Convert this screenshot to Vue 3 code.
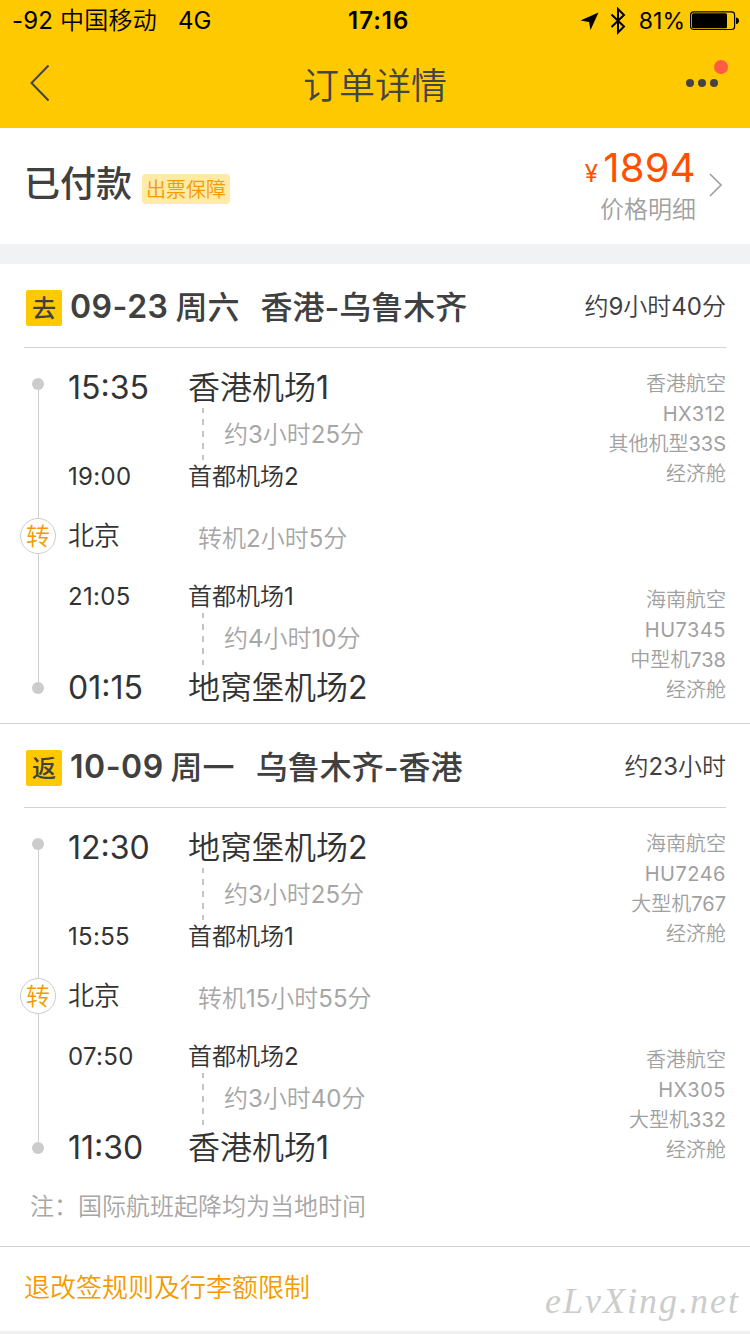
<template>
  <div class="page">
    <header class="top">
      <div class="status">
        <span class="carrier">-92 中国移动</span>
        <span class="net">4G</span>
        <span class="clock">17:16</span>
        <div class="status-right">
          <svg class="locate" width="20" height="20" viewBox="0 0 20 20">
            <path d="M18.5 1.5L0.5 9.5L9 11L10.5 19Z" fill="#000" />
          </svg>
          <svg class="bluetooth" width="16" height="28" viewBox="0 0 16 28">
            <path d="M1.5 7.5L14 19.5L8 25.5V2L14 8L1.5 20" fill="none" stroke="#000" stroke-width="2" />
          </svg>
          <span class="percent">81%</span>
          <svg class="battery" width="50" height="20" viewBox="0 0 50 20">
            <rect x="0.6" y="0.9" width="44" height="17.6" rx="3" fill="none" stroke="#000" stroke-width="1.2" />
            <rect x="2" y="2.2" width="35" height="15" rx="1.5" fill="#000" />
            <path d="M46 6.5Q49 7 49 9.7Q49 12.500 46 13Z" fill="#000" />
          </svg>
        </div>
      </div>
      <nav class="nav">
        <svg class="back" width="20" height="38" viewBox="0 0 20 38">
          <path d="M18.500 1.500L1.500 19L18.500 36.500" fill="none" stroke="#444" stroke-width="2" />
        </svg>
        <h1>订单详情</h1>
        <div class="more">
          <i></i><i></i><i></i>
          <b class="badge"></b>
        </div>
      </nav>
    </header>

    <section class="summary">
      <h2>已付款</h2>
      <span class="tag">出票保障</span>
      <div class="price">
        <p class="amount"><small>¥</small>1894</p>
        <p class="detail">价格明细</p>
      </div>
      <svg class="arrow" width="14" height="24" viewBox="0 0 14 24">
        <path d="M1 1L12 12L1 23" fill="none" stroke="#a0a0a0" stroke-width="1.7" />
      </svg>
    </section>

    <section v-for="trip in trips" :key="trip.type" class="trip">
      <div class="trip-head">
        <span class="type">{{ trip.type }}</span>
        <span class="date">{{ trip.date }}</span>
        <span class="week">{{ trip.week }}</span>
        <span class="route">{{ trip.route }}</span>
        <span class="total">{{ trip.total }}</span>
      </div>
      <div class="trip-body">
        <div class="rail">
          <i class="dot"></i>
          <i class="line"></i>
          <span class="turn">转</span>
          <i class="line"></i>
          <i class="dot"></i>
        </div>
        <div class="stops">
          <template v-for="(leg, index) in trip.legs" :key="leg.no">
            <div v-if="index === 1" class="transfer">
              <span class="city">{{ trip.city }}</span>
              <span class="wait">{{ trip.wait }}</span>
            </div>
            <div class="stop" :class="{ big: index === 0 }">
              <span class="time">{{ leg.start }}</span>
              <span>{{ leg.from }}</span>
            </div>
            <div class="duration" :class="{ short: index === 1 }">
              <i class="dash"></i>
              <span>{{ leg.duration }}</span>
            </div>
            <div class="stop" :class="{ big: index === 1, last: index === 1 }">
              <span class="time">{{ leg.end }}</span>
              <span>{{ leg.to }}</span>
            </div>
          </template>
        </div>
        <div class="planes">
          <ul v-for="leg in trip.legs" :key="leg.no">
            <li>{{ leg.airline }}</li>
            <li class="no">{{ leg.no }}</li>
            <li>{{ leg.plane }}</li>
            <li>经济舱</li>
          </ul>
        </div>
      </div>
    </section>

    <p class="note">注：国际航班起降均为当地时间</p>
    <footer class="rules">
      <span>退改签规则及行李额限制</span>
      <span class="mark">eLvXing.net</span>
    </footer>
  </div>
</template>

<script setup>
import { ref } from 'vue';

const trips = ref([
  {
    type: '去',
    date: '09-23',
    week: '周六',
    route: '香港-乌鲁木齐',
    total: '约9小时40分',
    city: '北京',
    wait: '转机2小时5分',
    legs: [
      { start: '15:35', from: '香港机场1', duration: '约3小时25分', end: '19:00', to: '首都机场2', airline: '香港航空', no: 'HX312', plane: '其他机型33S' },
      { start: '21:05', from: '首都机场1', duration: '约4小时10分', end: '01:15', to: '地窝堡机场2', airline: '海南航空', no: 'HU7345', plane: '中型机738' }
    ]
  },
  {
    type: '返',
    date: '10-09',
    week: '周一',
    route: '乌鲁木齐-香港',
    total: '约23小时',
    city: '北京',
    wait: '转机15小时55分',
    legs: [
      { start: '12:30', from: '地窝堡机场2', duration: '约3小时25分', end: '15:55', to: '首都机场1', airline: '海南航空', no: 'HU7246', plane: '大型机767' },
      { start: '07:50', from: '首都机场2', duration: '约3小时40分', end: '11:30', to: '香港机场1', airline: '香港航空', no: 'HX305', plane: '大型机332' }
    ]
  }
]);
</script>

<style>
body {
  margin: 0;
  background-color: #fff;
}
</style>

<style scoped>
.page {
  width: 750px;
  height: 1334px;
  overflow: hidden;
  background-color: #fff;
  color: #333;
  font-family: Inter, "Noto Sans CJK SC DemiLight", "Noto Sans CJK SC", sans-serif;
  font-size: 24px;
  white-space: nowrap;
}

h1,
h2,
p,
ul {
  margin: 0;
  padding: 0;
}

i {
  display: block;
}

.top {
  height: 128px;
  background-color: #ffc900;
}

.status {
  display: grid;
  grid-template-columns: 166px 158px 84px 1fr;
  align-items: center;
  height: 40px;
  padding-left: 12px;
  color: #000;
  line-height: 40px;
}

.carrier,
.net,
.clock,
.percent {
  padding-top: 1px;
}

.carrier {
  letter-spacing: 0.2px;
}

.clock {
  padding-left: 12px;
  font-weight: 600;
  letter-spacing: 1px;
}

.status-right {
  display: flex;
  align-items: center;
  justify-content: flex-end;
  padding-right: 10px;
}

.bluetooth {
  margin-left: 10px;
}

.percent {
  margin-left: 13px;
  margin-right: 5px;
  font-size: 23px;
}

.nav {
  display: flex;
  align-items: center;
  justify-content: space-between;
  height: 88px;
  padding: 0 32px 2px 30px;
  box-sizing: border-box;
}

.nav h1 {
  padding-left: 14px;
  color: #444;
  font-size: 36px;
  font-weight: 400;
}

.more {
  position: relative;
  display: flex;
  gap: 4px;
}

.more i {
  width: 8px;
  height: 8px;
  border-radius: 50%;
  background-color: #444;
}

.badge {
  position: absolute;
  top: -19px;
  right: -10px;
  width: 14px;
  height: 14px;
  border-radius: 50%;
  background-color: #ff5b45;
}

.summary {
  display: flex;
  align-items: center;
  height: 116px;
  padding: 0 27px 0 24px;
  border-bottom: 20px solid #f1f2f4;
}

.summary h2 {
  padding-bottom: 4px;
  color: #404040;
  font-family: Inter, "Noto Sans CJK SC", sans-serif;
  font-size: 36px;
  font-weight: 500;
  line-height: 40px;
}

.tag {
  height: 30px;
  margin-top: 5px;
  margin-left: 10px;
  padding: 0 4px;
  border-radius: 4px;
  background-color: #ffeaa6;
  color: #f39b00;
  font-size: 20px;
  line-height: 32px;
}

.price {
  margin-left: auto;
  text-align: right;
}

.amount {
  padding-top: 2px;
  color: #ff5000;
  font-size: 40px;
  line-height: 44px;
  letter-spacing: 0.3px;
}

.amount small {
  margin-right: 5px;
  font-size: 24px;
}

.detail {
  color: #a0a0a0;
  line-height: 28px;
  padding-bottom: 4px;
}

.arrow {
  margin-left: 13px;
  margin-bottom: 2px;
}

.trip-head {
  display: flex;
  align-items: center;
  height: 83px;
  margin: 0 24px;
  border-bottom: 1px solid #d2d2d2;
  color: #404040;
  font-family: Inter, "Noto Sans CJK SC", sans-serif;
  font-size: 32px;
  font-weight: 500;
}

.type {
  width: 36px;
  height: 36px;
  margin-top: 4px;
  margin-left: 2px;
  border-radius: 2px;
  background-color: #ffc900;
  font-size: 24px;
  line-height: 37px;
  text-align: center;
}

.date {
  margin-left: 8px;
  padding-top: 2px;
  font-weight: 600;
  letter-spacing: 0.5px;
}

.week {
  margin-left: 7px;
}

.route {
  margin-left: 21px;
}

.week,
.route {
  padding-bottom: 2px;
}

.total {
  margin-left: auto;
  padding-bottom: 3px;
  font-family: Inter, "Noto Sans CJK SC DemiLight", "Noto Sans CJK SC", sans-serif;
  font-size: 24px;
  font-weight: 400;
}

.trip-body {
  display: flex;
  height: 375px;
  padding: 0 24px 0 20px;
  border-bottom: 1px solid #d2d2d2;
}

.trip:nth-of-type(3) .trip-body {
  border-bottom-color: transparent;
}

.rail {
  display: flex;
  flex-direction: column;
  align-items: center;
  width: 36px;
  padding: 30px 0 29px;
}

.dot {
  width: 12px;
  height: 12px;
  border-radius: 50%;
  background-color: #ccc;
}

.line {
  flex: 1;
  width: 1px;
  margin-left: 1px;
  background-color: #d0d0d0;
}

.turn {
  width: 34px;
  height: 34px;
  border: 1px solid #ccc;
  border-radius: 50%;
  color: #f39b00;
  line-height: 35px;
  text-align: center;
}

.stops {
  flex: 1;
  padding: 16px 0 0 12px;
}

.stop,
.transfer {
  display: grid;
  grid-template-columns: 120px 1fr;
  line-height: 40px;
}

.time {
  letter-spacing: 0.3px;
}

.stop.big {
  font-size: 32px;
  line-height: 48px;
}

.stop.big .time {
  letter-spacing: 0;
}

.stop.last {
  line-height: 54px;
}

.transfer {
  height: 80px;
  line-height: 78px;
}

.city {
  font-size: 26px;
}

.wait {
  padding-left: 10px;
  padding-top: 3px;
  color: #a6a6a6;
}

.duration {
  display: flex;
  align-items: center;
  height: 45px;
  padding-left: 134px;
  color: #a6a6a6;
}

.duration span {
  padding-bottom: 5px;
}

.duration.short {
  height: 44px;
}

.duration.short span {
  padding-bottom: 6px;
}

.dash {
  width: 2px;
  height: 52px;
  margin-right: 20px;
  margin-bottom: 1px;
  background: repeating-linear-gradient(#c4c4c4 0 5px, transparent 5px 11px, #c4c4c4 11px 12px);
}

.planes {
  display: flex;
  flex-direction: column;
  gap: 96px;
  padding-top: 21px;
}

.planes ul {
  list-style: none;
  color: #a0a0a0;
  font-size: 20px;
  line-height: 30px;
  text-align: right;
}

.no {
  letter-spacing: 0.5px;
}

.note {
  padding-top: 1px;
  padding-left: 30px;
  height: 61px;
  border-bottom: 1px solid #d2d2d2;
  color: #a6a6a6;
  line-height: 44px;
}

.rules {
  position: relative;
  height: 84px;
  padding-left: 24px;
  border-bottom: 3px solid #f1f1f1;
  color: #f39b00;
  font-size: 26px;
  line-height: 82px;
}

.mark {
  position: absolute;
  top: 13px;
  right: 10px;
  color: #ccc;
  font-family: "Liberation Serif", serif;
  font-size: 36px;
  font-style: italic;
  letter-spacing: 2px;
}
</style>
